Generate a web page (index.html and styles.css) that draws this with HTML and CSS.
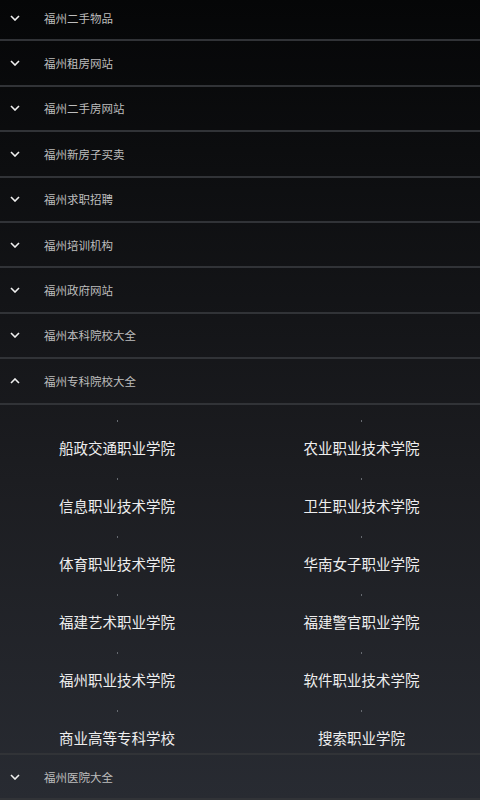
FILE: index.html
```html
<!DOCTYPE html>
<html lang="zh-CN">
<head>
  <meta charset="UTF-8">
  <meta name="viewport" content="width=device-width, initial-scale=1.0">
  <title>福州分类大全</title>
  <link rel="stylesheet" href="styles.css">
</head>
<body>
  <div class="list">
    <div class="item">
      <div class="head"><svg class="arrow" viewBox="0 0 10 6"><path d="M1 1l4 4 4-4"/></svg><span>福州二手物品</span></div>
    </div>
    <div class="item">
      <div class="head"><svg class="arrow" viewBox="0 0 10 6"><path d="M1 1l4 4 4-4"/></svg><span>福州租房网站</span></div>
    </div>
    <div class="item">
      <div class="head"><svg class="arrow" viewBox="0 0 10 6"><path d="M1 1l4 4 4-4"/></svg><span>福州二手房网站</span></div>
    </div>
    <div class="item">
      <div class="head"><svg class="arrow" viewBox="0 0 10 6"><path d="M1 1l4 4 4-4"/></svg><span>福州新房子买卖</span></div>
    </div>
    <div class="item">
      <div class="head"><svg class="arrow" viewBox="0 0 10 6"><path d="M1 1l4 4 4-4"/></svg><span>福州求职招聘</span></div>
    </div>
    <div class="item">
      <div class="head"><svg class="arrow" viewBox="0 0 10 6"><path d="M1 1l4 4 4-4"/></svg><span>福州培训机构</span></div>
    </div>
    <div class="item">
      <div class="head"><svg class="arrow" viewBox="0 0 10 6"><path d="M1 1l4 4 4-4"/></svg><span>福州政府网站</span></div>
    </div>
    <div class="item">
      <div class="head"><svg class="arrow" viewBox="0 0 10 6"><path d="M1 1l4 4 4-4"/></svg><span>福州本科院校大全</span></div>
    </div>
    <div class="item open">
      <div class="head"><svg class="arrow" viewBox="0 0 10 6"><path d="M1 5l4-4 4 4"/></svg><span>福州专科院校大全</span></div>
      <div class="panel">
        <a class="cell"><i class="dot"></i><span>船政交通职业学院</span></a>
        <a class="cell"><i class="dot"></i><span>农业职业技术学院</span></a>
        <a class="cell"><i class="dot"></i><span>信息职业技术学院</span></a>
        <a class="cell"><i class="dot"></i><span>卫生职业技术学院</span></a>
        <a class="cell"><i class="dot"></i><span>体育职业技术学院</span></a>
        <a class="cell"><i class="dot"></i><span>华南女子职业学院</span></a>
        <a class="cell"><i class="dot"></i><span>福建艺术职业学院</span></a>
        <a class="cell"><i class="dot"></i><span>福建警官职业学院</span></a>
        <a class="cell"><i class="dot"></i><span>福州职业技术学院</span></a>
        <a class="cell"><i class="dot"></i><span>软件职业技术学院</span></a>
        <a class="cell"><i class="dot"></i><span>商业高等专科学校</span></a>
        <a class="cell"><i class="dot"></i><span>搜索职业学院</span></a>
      </div>
    </div>
    <div class="item">
      <div class="head"><svg class="arrow" viewBox="0 0 10 6"><path d="M1 1l4 4 4-4"/></svg><span>福州医院大全</span></div>
    </div>
  </div>
</body>
</html>
```

FILE: styles.css
```css
html, body {
  height: 100%;
}
body {
  margin: 0;
  overflow: hidden;
  background: linear-gradient(to bottom, #050607 0%, #141518 40%, #1c1d21 60%, #282b32 100%);
  font-family: "Noto Sans CJK SC", "Noto Sans", sans-serif;
}
.list {
  margin-top: -4px;
}
.item {
  border-bottom: 2px solid #313337;
}
.head {
  height: 43.4px;
  display: flex;
  align-items: center;
  color: #bdbdbd;
  font-size: 11.5px;
}
.arrow {
  width: 10px;
  height: 6px;
  margin-left: 10px;
  margin-right: 24px;
  fill: none;
  stroke: #f0f0f0;
  stroke-width: 1.6;
}
.open .head {
  border-bottom: 2px solid #313337;
}
.panel {
  display: grid;
  grid-template-columns: 1fr 1fr;
  grid-auto-rows: 58.1px;
}
.cell {
  display: flex;
  flex-direction: column;
  align-items: center;
  padding-top: 15px;
  color: #eeeeee;
  font-size: 14.5px;
  line-height: 20px;
}
.cell:nth-child(odd) {
  padding-right: 6px;
}
.cell:nth-child(even) {
  padding-left: 3px;
}
.dot {
  width: 1px;
  height: 2px;
  background: #666a70;
  margin-bottom: 16px;
}
```
